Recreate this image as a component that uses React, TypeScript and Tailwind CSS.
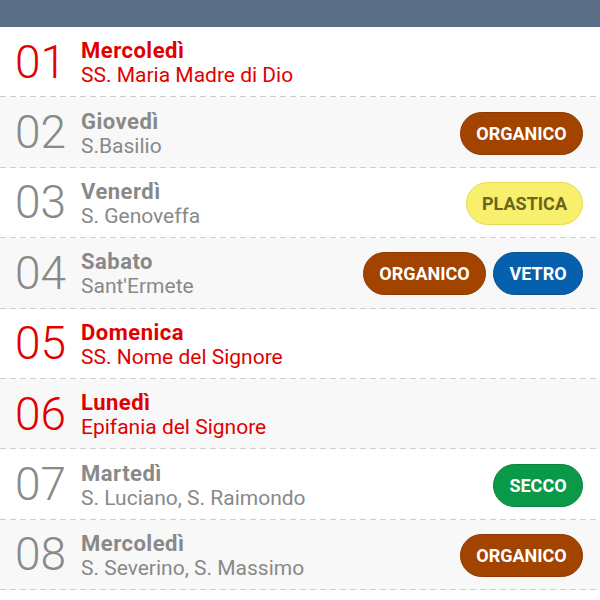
import React from "react";

type Bin = "organico" | "plastica" | "vetro" | "secco";

const BIN_STYLE: Record<Bin, { label: string; cls: string }> = {
  organico: { label: "ORGANICO", cls: "w-[123px] bg-[#a24300] border-[#8c3800] text-white" },
  plastica: { label: "PLASTICA", cls: "w-[117px] bg-[#f8ef6c] border-[#e6da52] text-[#6b661c]" },
  vetro: { label: "VETRO", cls: "w-[90px] bg-[#0760ad] border-[#0a4f8e] text-white" },
  secco: { label: "SECCO", cls: "w-[90px] bg-[#0a9a47] border-[#0a823b] text-white" },
};

type Day = { n: string; name: string; saint: string; holiday?: boolean; bins: Bin[] };

const DAYS: Day[] = [
  { n: "01", name: "Mercoledì", saint: "SS. Maria Madre di Dio", holiday: true, bins: [] },
  { n: "02", name: "Giovedì", saint: "S.Basilio", bins: ["organico"] },
  { n: "03", name: "Venerdì", saint: "S. Genoveffa", bins: ["plastica"] },
  { n: "04", name: "Sabato", saint: "Sant'Ermete", bins: ["organico", "vetro"] },
  { n: "05", name: "Domenica", saint: "SS. Nome del Signore", holiday: true, bins: [] },
  { n: "06", name: "Lunedì", saint: "Epifania del Signore", holiday: true, bins: [] },
  { n: "07", name: "Martedì", saint: "S. Luciano, S. Raimondo", bins: ["secco"] },
  { n: "08", name: "Mercoledì", saint: "S. Severino, S. Massimo", bins: ["organico"] },
];

function Pill({ bin }: { bin: Bin }) {
  const s = BIN_STYLE[bin];
  return (
    <span
      className={`flex h-[43px] items-center justify-center rounded-full border text-[18px] font-bold ${s.cls}`}
    >
      {s.label}
    </span>
  );
}

export default function App() {
  return (
    <div className="h-[600px] w-[600px] overflow-hidden bg-white font-['Roboto',sans-serif]">
      <div className="h-[27px] bg-[#5b6f86]" />
      {DAYS.map((d, i) => {
        const color = d.holiday ? "text-[#e10000]" : "text-[#898989]";
        return (
          <div key={d.n} className={i % 2 === 1 ? "bg-[#f8f8f8]" : "bg-white"}>
            <div className="flex h-[69.4px] items-center pl-[15px] pr-[17px]">
              <span className={`w-[66px] text-[46px] font-light leading-none ${color}`}>{d.n}</span>
              <div className={`flex flex-col pt-[3px] ${color}`}>
                <span className="text-[22px] font-bold leading-[24px] tracking-[0.5px]">{d.name}</span>
                <span className="text-[21px] leading-[24px]">{d.saint}</span>
              </div>
              <div className="ml-auto flex gap-[7px] pt-[2px]">
                {d.bins.map((b) => (
                  <Pill key={b} bin={b} />
                ))}
              </div>
            </div>
            <div className="h-px bg-[repeating-linear-gradient(to_right,#cfcfcf_0_6px,transparent_6px_10px)]" />
          </div>
        );
      })}
    </div>
  );
}
